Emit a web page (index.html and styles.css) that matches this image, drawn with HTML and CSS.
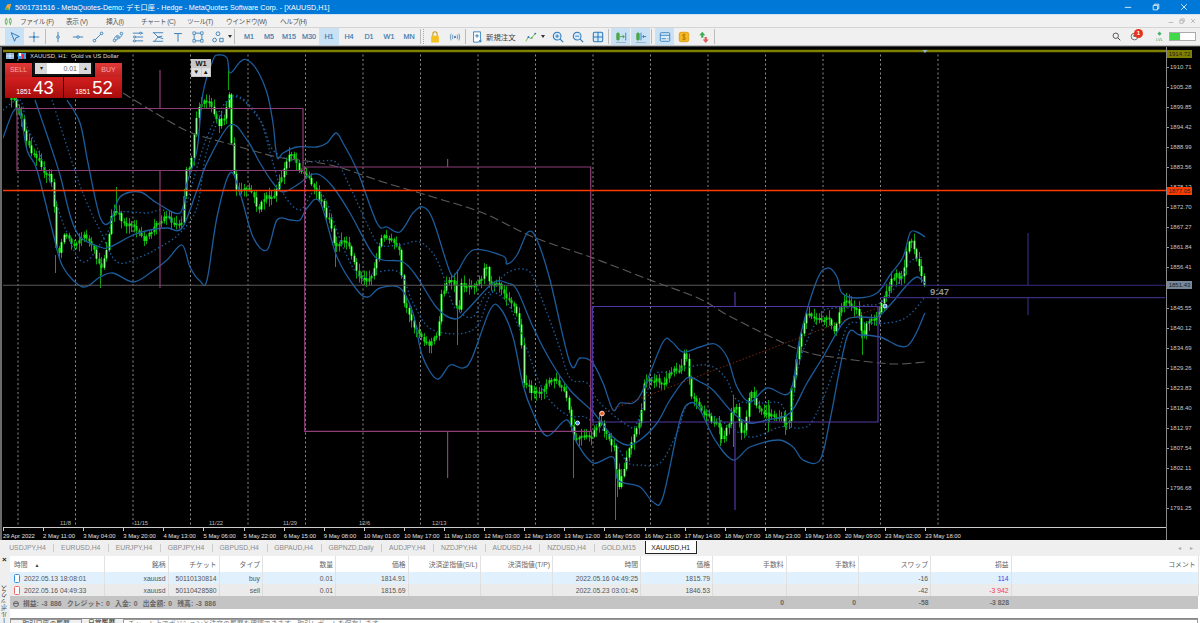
FILE: index.html
```html
<!DOCTYPE html>
<html lang="ja">
<head>
<meta charset="utf-8">
<title>MetaTrader 5 - XAUUSD,H1</title>
<link rel="stylesheet" href="styles.css">
</head>
<body>
<div class="app">
  <header class="titlebar">
    <svg class="appicon" viewBox="0 0 10 10"><path d="M1 8L4 2L9 1L7 9Z" fill="#f2a53a"/><path d="M1 8L4 5L7 9Z" fill="#4fb24f"/></svg>
    <span class="title-text">5001731516 - MetaQuotes-Demo: デモ口座 - Hedge - MetaQuotes Software Corp. - [XAUUSD,H1]</span>
    <div class="wincontrols">
      <svg viewBox="0 0 10 10"><path d="M1 5.500H9" stroke="#fff" fill="none"/></svg>
      <svg viewBox="0 0 10 10"><path d="M1.500 3H7V8.500H1.500ZM3 3V1.500H8.500V7H7" stroke="#fff" fill="none"/></svg>
      <svg viewBox="0 0 10 10"><path d="M1.500 1.500L8.500 8.500M8.500 1.500L1.500 8.500" stroke="#fff" fill="none"/></svg>
    </div>
  </header>

  <nav class="menubar">
    <svg class="menuicon" viewBox="0 0 10 10"><path d="M2.500 1V9M7 1V9" stroke="#4aa64a"/><path d="M1.500 3H3.500V7H1.500ZM6 2.500H8V6.500H6Z" fill="#fff" stroke="#4aa64a" stroke-width=".8"/></svg>
    <span class="mi m1">ファイル (F)</span>
    <span class="mi m2">表示 (V)</span>
    <span class="mi m3">挿入(I)</span>
    <span class="mi m4">チャート (C)</span>
    <span class="mi m5">ツール(T)</span>
    <span class="mi m6">ウインドウ(W)</span>
    <span class="mi m7">ヘルプ(H)</span>
    <div class="mdicontrols">
      <svg viewBox="0 0 8 8"><path d="M1 6H7" stroke="#aaa" fill="none"/></svg>
      <svg viewBox="0 0 8 8"><path d="M1 3H5.500V7H1ZM2.500 3V1.200H7V5H5.500" stroke="#aaa" fill="none"/></svg>
      <svg viewBox="0 0 8 8"><path d="M1.500 1.500L6.500 6.500M6.500 1.500L1.500 6.500" stroke="#aaa" fill="none"/></svg>
    </div>
  </nav>

  <div class="toolbar">
    <span class="tb on first"><svg class="ti" viewBox="0 0 14 14"><path d="M2.500 2L12 6.500L8 8L6.500 12Z" fill="none" stroke="#2b78b8" stroke-width="1.100"/></svg></span>
    <span class="tb"><svg class="ti" viewBox="0 0 14 14"><path d="M7 1V13M1 7H13" stroke="#2b78b8"/><circle cx="7" cy="7" r="1.200" fill="#2b78b8"/></svg></span>
    <i class="sep"></i>
    <span class="tb"><svg class="ti" viewBox="0 0 14 14"><path d="M7 1V13" stroke="#2b78b8"/><circle cx="7" cy="7" r="1.500" fill="#eee" stroke="#2b78b8"/></svg></span>
    <span class="tb"><svg class="ti" viewBox="0 0 14 14"><path d="M1 7H13" stroke="#2b78b8"/><circle cx="7" cy="7" r="1.500" fill="#eee" stroke="#2b78b8"/></svg></span>
    <span class="tb"><svg class="ti" viewBox="0 0 14 14"><path d="M3 11L11 3" stroke="#2b78b8"/><circle cx="2.800" cy="11.200" r="1.500" fill="#eee" stroke="#2b78b8"/><circle cx="11.200" cy="2.800" r="1.500" fill="#eee" stroke="#2b78b8"/></svg></span>
    <span class="tb"><svg class="ti" viewBox="0 0 14 14"><path d="M2 9L6 5M8 9L12 5M3 12L7 9" stroke="#2b78b8"/><circle cx="3" cy="11" r="1.500" fill="#eee" stroke="#2b78b8"/><circle cx="7" cy="7" r="1.500" fill="#eee" stroke="#2b78b8"/><circle cx="11" cy="3" r="1.500" fill="#eee" stroke="#2b78b8"/></svg></span>
    <span class="tb"><svg class="ti" viewBox="0 0 14 14"><path d="M1 2.500H13M3 7H13M1 11.500H13" stroke="#2b78b8"/><circle cx="10" cy="2.500" r="1.200" fill="#eee" stroke="#2b78b8"/><circle cx="3" cy="7" r="1.200" fill="#eee" stroke="#2b78b8"/><circle cx="3" cy="11.500" r="1.200" fill="#eee" stroke="#2b78b8"/></svg></span>
    <span class="tb"><svg class="ti" viewBox="0 0 14 14"><path d="M1 2H13M1 12H13M2 2L7 7L3 12M7 7L12 6M7 7L13 9" stroke="#2b78b8" fill="none"/></svg></span>
    <span class="tb"><svg class="ti" viewBox="0 0 14 14"><path d="M2.500 3H11.500M7 3V12.500" stroke="#2b78b8" stroke-width="1.100"/></svg></span>
    <span class="tb"><svg class="ti" viewBox="0 0 14 14"><path d="M2.500 2.500H11.500V11.500H2.500Z" fill="none" stroke="#2b78b8"/><path d="M1 1H4V4H1ZM10 1H13V4H10ZM1 10H4V13H1ZM10 10H13V13H10Z" fill="#eee" stroke="#2b78b8" stroke-width=".8"/></svg></span>
    <span class="tb"><svg class="ti" viewBox="0 0 14 14"><circle cx="7" cy="3.200" r="2.200" fill="none" stroke="#2b78b8"/><circle cx="3" cy="10.500" r="2.200" fill="none" stroke="#2b78b8"/><path d="M9 8.500H13V12.500H9Z" fill="none" stroke="#2b78b8"/></svg></span>
    <i class="drop"></i>
    <i class="sep s2"></i>
    <span class="tb tf">M1</span><span class="tb tf">M5</span><span class="tb tf">M15</span><span class="tb tf">M30</span><span class="tb tf on">H1</span><span class="tb tf">H4</span><span class="tb tf">D1</span><span class="tb tf">W1</span><span class="tb tf">MN</span>
    <i class="sep s3"></i><i class="grip"></i>
    <span class="tb"><svg class="ti" viewBox="0 0 14 14"><path d="M4.500 6V3.500A2.500 2.500 0 0 1 9.500 3.500V6" fill="none" stroke="#c99a1a" stroke-width="1.200"/><rect x="2.500" y="5.500" width="9" height="8" rx="1" fill="#f3c01f"/></svg></span>
    <span class="tb"><svg class="ti" viewBox="0 0 14 14"><circle cx="7" cy="7" r="1.500" fill="#5f8fb8"/><path d="M4.500 4.500Q3 7 4.500 9.500M9.500 4.500Q11 7 9.500 9.500M2.500 3Q.5 7 2.500 11M11.500 3Q13.500 7 11.500 11" fill="none" stroke="#5f8fb8"/></svg></span>
    <i class="sep s4"></i>
    <span class="neworder"><svg class="ti" viewBox="0 0 14 14"><path d="M3 1H11V10L8.500 13H3Z" fill="#fff" stroke="#2b78b8"/><path d="M7 3.500V8M4.800 5.700H9.200" stroke="#2b78b8"/><path d="M9 13L12 9.500V13Z" fill="#2b78b8"/></svg><span>新規注文</span></span>
    <span class="tb narrow"><svg class="ti" viewBox="0 0 14 14"><path d="M1 12L4 7L7 9L12 3" fill="none" stroke="#62b04a"/><circle cx="4" cy="7" r="1.100" fill="#2b78b8"/><circle cx="8" cy="8" r="1.100" fill="#62b04a"/><circle cx="12" cy="3" r="1.100" fill="#2b78b8"/></svg></span>
    <i class="drop d2"></i>
    <span class="tb"><svg class="ti" viewBox="0 0 14 14"><circle cx="6" cy="6" r="4.500" fill="#d8ebf8" stroke="#2b78b8" stroke-width="1.200"/><path d="M9.500 9.500L13 13" stroke="#2b78b8" stroke-width="1.400"/><path d="M6 3.800V8.200M3.800 6H8.200" stroke="#2b78b8"/></svg></span>
    <span class="tb"><svg class="ti" viewBox="0 0 14 14"><circle cx="6" cy="6" r="4.500" fill="#d8ebf8" stroke="#2b78b8" stroke-width="1.200"/><path d="M9.500 9.500L13 13" stroke="#2b78b8" stroke-width="1.400"/><path d="M3.800 6H8.200" stroke="#2b78b8"/></svg></span>
    <span class="tb"><svg class="ti" viewBox="0 0 14 14"><rect x="1.500" y="1.500" width="11" height="11" rx="1.500" fill="#d8ebf8" stroke="#2b78b8" stroke-width="1.200"/><path d="M7 1.500V12.500M1.500 7H12.500" stroke="#2b78b8" stroke-width="1.200"/></svg></span>
    <i class="sep s5"></i>
    <span class="tb on act"><svg class="ti" viewBox="0 0 14 14"><path d="M2 3H5V10H2ZM3.500 1V12" fill="#56b84a" stroke="#3f9a3a" stroke-width=".8"/><path d="M6 6.500H10.500M9 4.800L11 6.500L9 8.200" fill="none" stroke="#3f9a3a"/><path d="M12.500 2V11" stroke="#2b78b8"/><path d="M1 13.500H13" stroke="#9ab"/></svg></span>
    <span class="tb on act"><svg class="ti" viewBox="0 0 14 14"><path d="M2 3H5V10H2ZM3.500 1V12" fill="#56b84a" stroke="#3f9a3a" stroke-width=".8"/><path d="M7 2V11" stroke="#2b78b8"/><path d="M9 6.500H13M10.500 4.800L8.800 6.500L10.500 8.200" fill="none" stroke="#2b78b8"/><path d="M1 13.500H13" stroke="#9ab"/></svg></span>
    <i class="sep s6"></i>
    <span class="tb on term"><svg class="ti" viewBox="0 0 14 14"><rect x="1.500" y="2" width="11" height="10" rx="1" fill="#d8ebf8" stroke="#2b78b8"/><path d="M1.500 5H12.500M3 9H8M10 9H11" stroke="#2b78b8"/></svg></span>
    <span class="tb"><svg class="ti" viewBox="0 0 14 14"><rect x="1.500" y="1.500" width="11" height="11" rx="2" fill="#f4b91f" stroke="#e39a12"/><path d="M9 4.500Q7 3.500 5.500 4.800Q5 6.500 7 7T8.500 9.500Q7 10.500 5 9.500M7 3V11" fill="none" stroke="#a8650c" stroke-width=".8"/></svg></span>
    <span class="tb"><svg class="ti" viewBox="0 0 14 14"><path d="M1.500 5L5 1L8.500 5H6.300V8H3.700V5Z" fill="#39ac4f"/><path d="M5.500 10L9 14L12.500 10H10.300V7H7.700V10Z" fill="#e25b5b"/></svg></span>
    <i class="sep s7"></i>
    <div class="tb-right">
      <svg class="rsearch" viewBox="0 0 12 12"><circle cx="5" cy="5" r="3.600" fill="none" stroke="#444" stroke-width="1.200"/><path d="M7.800 7.800L11 11" stroke="#444" stroke-width="1.300"/></svg>
      <span class="account"><svg viewBox="0 0 12 12"><circle cx="6" cy="6" r="4.500" fill="none" stroke="#666" stroke-width="1.200"/><circle cx="6" cy="5" r="1.600" fill="#666"/></svg><b class="badge">1</b></span>
      <span class="lvl"><svg viewBox="0 0 10 7"><path d="M5 0L8 3L5 6L2 3Z" fill="#45b36b"/></svg><em>LVL</em></span>
      <span class="meter"><i></i></span>
    </div>
  </div>

  <section class="chartframe">
    <div class="plot">
      <svg id="chart" class="canvas" viewBox="3 47 1163 480" width="1163" height="480">
        <g id="grid"></g>
        <g id="candles"></g>
        <g id="bands"></g>
        <g class="pink">
          <path d="M160 70V108M17 108.500H303V170.500H17ZM160 170V288M304.700 167H590.700V431.300H304.700ZM447.600 159V167M447.600 431V478"/>
        </g>
        <g class="violet">
          <path d="M592.300 306.500H878V422H592.300ZM735 292V306M735 422V510"/>
        </g>
        <path class="violet-dark" d="M880 285.300H1165M880 297.600H1165M1028 233V285M1028 298V315"/>
        <path class="priceline" d="M3 285.300H880"/>
        <path class="stopline" d="M3 190.500H1166"/>
        <path class="olive" d="M3 51H1166"/>
        <path class="marker" d="M922.500 50H927.500L925 53Z"/>
        <path class="tradeline" d="M602 413L885 305"/>
        <g class="trades">
          <circle class="t-buy" cx="577.500" cy="423" r="2"/>
          <circle class="t-sell" cx="602" cy="413.500" r="2.300"/>
          <circle class="t-buy" cx="885" cy="306" r="2"/>
        </g>
        <g class="weeks">
          <text x="60" y="525">11/8</text><text x="134" y="525">11/15</text><text x="209" y="525">11/22</text><text x="283" y="525">11/29</text><text x="359" y="525">12/6</text><text x="432" y="525">12/13</text>
        </g>
      </svg>
      <div class="timeaxis">
        <span>29 Apr 2022</span><span>2 May 11:00</span><span>3 May 04:00</span><span>3 May 20:00</span><span>4 May 13:00</span><span>5 May 06:00</span><span>5 May 22:00</span><span>6 May 15:00</span><span>9 May 08:00</span><span>10 May 01:00</span><span>10 May 17:00</span><span>11 May 10:00</span><span>12 May 03:00</span><span>12 May 19:00</span><span>13 May 12:00</span><span>16 May 05:00</span><span>16 May 21:00</span><span>17 May 14:00</span><span>18 May 07:00</span><span>18 May 23:00</span><span>19 May 16:00</span><span>20 May 09:00</span><span>23 May 02:00</span><span>23 May 18:00</span>
      </div>
    </div>
    <div class="priceaxis">
      <span>1910.71</span><span>1905.28</span><span>1899.85</span><span>1894.42</span><span>1888.99</span><span>1883.56</span><span>1878.13</span><span>1872.70</span><span>1867.27</span><span>1861.84</span><span>1856.41</span><span></span><span>1845.55</span><span>1840.12</span><span>1834.69</span><span>1829.26</span><span>1823.83</span><span>1818.40</span><span>1812.97</span><span>1807.54</span><span>1802.11</span><span>1796.68</span><span>1791.25</span>
    </div>
    <b class="tag tag-olive">1914.72</b>
    <b class="tag tag-red">1877.05</b>
    <b class="tag tag-grey">1851.43</b>

    <div class="charthead">
      <svg viewBox="0 0 20 8" width="20" height="8"><rect x="0" y="1" width="8" height="6" fill="#8fb4dc"/><path d="M0 4H8M4 1V7" stroke="#fff" stroke-width=".6"/><rect x="12" y="1" width="8" height="6" fill="#3f9be8"/><rect x="13" y="1" width="2" height="3" fill="#fff"/><rect x="16" y="2" width="2" height="5" fill="#e24"/></svg>
      <span>XAUUSD, H1:  Gold vs US Dollar</span>
    </div>
    <div class="trade">
      <div class="trade-top">
        <span class="mini">SELL</span>
        <span class="lot"><i class="lotbtn">▾</i><span class="lotval">0.01</span><i class="lotbtn">▴</i></span>
        <span class="mini">BUY</span>
      </div>
      <div class="trade-bottom">
        <span class="quote"><small>1851</small><strong>43</strong></span>
        <span class="quote"><small>1851</small><strong>52</strong></span>
      </div>
    </div>
    <div class="w1"><b>W1</b><span><i>▼</i><i>▲</i></span></div>
    <span class="countdown">9:47</span>
  </section>

  <div class="tabs">
    <span>USDJPY,H4</span><span>EURUSD,H4</span><span>EURJPY,H4</span><span>GBPJPY,H4</span><span>GBPUSD,H4</span><span>GBPAUD,H4</span><span>GBPNZD,Daily</span><span>AUDJPY,H4</span><span>NZDJPY,H4</span><span>AUDUSD,H4</span><span>NZDUSD,H4</span><span>GOLD,M15</span><span class="active">XAUUSD,H1</span>
    <div class="tabnav"><i>◂</i><i>▸</i></div>
  </div>

  <section class="terminal">
    <aside class="toolbox"><b>×</b><span>ツールボックス</span></aside>
    <div class="tablewrap">
      <table class="trades-table">
        <colgroup><col class="c1"><col class="c2"><col class="c3"><col class="c4"><col class="c5"><col class="c6"><col class="c7"><col class="c8"><col class="c9"><col class="c10"><col class="c11"><col class="c12"><col class="c13"><col class="c14"><col class="c15"></colgroup>
        <thead>
          <tr><th class="left">時間 <em>▲</em></th><th>銘柄</th><th>チケット</th><th>タイプ</th><th>数量</th><th>価格</th><th>決済逆指値(S/L)</th><th>決済指値(T/P)</th><th>時間</th><th>価格</th><th>手数料</th><th>手数料</th><th>スワップ</th><th>損益</th><th>コメント</th></tr>
        </thead>
        <tbody>
          <tr class="buy"><td class="left"><i class="rowicon"></i>2022.05.13 18:08:01</td><td>xauusd</td><td>50110130814</td><td>buy</td><td>0.01</td><td>1814.91</td><td></td><td></td><td>2022.05.16 04:49:25</td><td>1815.79</td><td></td><td></td><td>-16</td><td class="pos">114</td><td></td></tr>
          <tr class="sell"><td class="left"><i class="rowicon"></i>2022.05.16 04:49:33</td><td>xauusd</td><td>50110428580</td><td>sell</td><td>0.01</td><td>1815.69</td><td></td><td></td><td>2022.05.23 03:01:45</td><td>1846.53</td><td></td><td></td><td>-42</td><td class="neg">-3 942</td><td></td></tr>
          <tr class="total"><td class="summary" colspan="10"><i class="minus"></i>損益: -3 886&nbsp; クレジット: 0&nbsp; 入金: 0&nbsp; 出金額: 0&nbsp; 残高: -3 886</td><td>0</td><td>0</td><td>-58</td><td>-3 828</td><td></td></tr>
        </tbody>
      </table>
      <div class="bottomtabs">
        <span class="btn">取引口座の履歴</span><span class="lab">日常履歴</span><span class="longbox">チャート上でポジションと注文の履歴を確認できます。取引レポートを保存します。</span>
      </div>
    </div>
  </section>
</div>
<script src="chart.js"></script>
</body>
</html>
```
FILE: styles.css
```css
* { box-sizing: border-box; }
html, body { margin: 0; padding: 0; background: #f0f0f0; }
body { font-family: "Liberation Sans", "Noto Sans CJK JP", sans-serif; font-size: 7px; color: #444; }
i, em { font-style: normal; }
.app { width: 1200px; height: 623px; overflow: hidden; display: flex; flex-direction: column; position: relative; }

/* title */
.titlebar { height: 14px; background: #0078d7; color: #fff; display: flex; align-items: center; padding-left: 4px; font-size: 7.2px; flex: none; }
.appicon { width: 8px; height: 8px; margin-right: 3px; }
.wincontrols { margin-left: auto; display: flex; gap: 20px; padding-right: 12px; }
.wincontrols svg { width: 8px; height: 8px; }

/* menu */
.menubar { height: 13px; display: flex; align-items: center; flex: none; background: #f1f1f1; border-top: 1px solid #cfe3f3; position: relative; font-size: 6.7px; letter-spacing: -.45px; color: #555; }
.menuicon { width: 9px; height: 9px; margin: 0 7px 0 4px; }
.mi { white-space: nowrap; flex: none; }
.m1 { width: 46px; }
.m2 { width: 40px; }
.m3 { width: 35px; }
.m4 { width: 46px; }
.m5 { width: 39px; }
.m6 { width: 54px; }
.m7 { width: 30px; }
.mdicontrols { margin-left: auto; display: flex; gap: 5px; padding-right: 4px; }
.mdicontrols svg { width: 6px; height: 6px; }

/* toolbar */
.toolbar { height: 19px; flex: none; display: flex; align-items: center; background: #f0f0f0; border-top: 1px solid #d4d4d4; border-bottom: 1px solid #bdbdbd; }
.tb { width: 20px; height: 17px; display: flex; align-items: center; justify-content: center; flex: none; }
.tb.first { margin-left: 5px; width: 19px; margin-right: 0; }
.tb.on { background: #c9e1f5; }
.ti { width: 12px; height: 12px; display: block; }
.sep { width: 1px; height: 15px; background: #bbb; flex: none; margin: 0 2px 0 1px; }
.sep.s2 { margin-left: 2px; margin-right: 4px; }
.sep.s3 { margin: 0 0 0 1px; }
.grip { width: 1px; height: 15px; border-left: 1px dotted #aaa; margin: 0 1px 0 2px; flex: none; }
.sep.s4 { margin: 0 1px 0 0; }
.sep.s5 { margin: 0 2px 0 0; }
.sep.s6 { margin: 0 2px 0 0; }
.sep.s7 { margin: 0; }
.tb.act { width: 19px; margin-right: 1px; }
.tb.term { width: 19px; margin-left: 1px; }
.drop { width: 0; height: 0; border-left: 2.5px solid transparent; border-right: 2.5px solid transparent; border-top: 3px solid #333; flex: none; }
.drop.d2 { margin: 0 3px 0 0; }
.tf { font-size: 7.2px; font-weight: 400; color: #2f76ad; -webkit-text-stroke: .15px #2f76ad; }
.neworder { display: flex; align-items: center; gap: 3px; width: 54px; flex: none; font-size: 7.4px; color: #444; padding-left: 4px; }
.neworder span { white-space: nowrap; }
.tb.narrow { width: 20px; }
.tb-right { margin-left: auto; display: flex; align-items: center; padding-right: 4px; }
.rsearch { width: 9px; height: 9px; margin-right: 9px; }
.account { position: relative; display: block; width: 9px; height: 9px; margin-right: 16px; }
.account svg { width: 9px; height: 9px; display: block; }
.badge { position: absolute; left: 4px; top: -3px; width: 9px; height: 9px; border-radius: 50%; background: #e8321e; color: #fff; font-size: 6px; line-height: 9px; text-align: center; }
.lvl { display: flex; flex-direction: column; align-items: center; width: 9px; margin-right: 5px; color: #3aa65a; font-size: 4px; line-height: 5px; }
.lvl svg { width: 7px; height: 6px; }
.meter { display: block; width: 27px; height: 9px; background: #fff; border: 1px solid #aaa; }
.meter i { display: block; width: 10px; height: 100%; background: #3fd94a; }

/* chart */
.chartframe { flex: none; height: 494px; display: flex; position: relative; background: #000; border-top: 1px solid #444; }
.plot { width: 1166px; flex: none; display: flex; flex-direction: column; padding-left: 3px; background: #000; box-shadow: inset 2px 0 0 #6a6a6a; }
.canvas { display: block; flex: none; }
.timeaxis { flex: none; display: grid; grid-template-columns: repeat(24, 40.1px); height: 13px; border-top: 1px solid #ccc; color: #e2e2e2; font-size: 5.9px; }
.timeaxis span { position: relative; padding: 4px 0 0 0; white-space: nowrap; line-height: 8px; }
.timeaxis span::before { content: ""; position: absolute; left: 0; top: 0; width: 1px; height: 3px; background: #ccc; }
.priceaxis { width: 34px; flex: none; height: 493px; border-left: 1px solid #888; display: flex; flex-direction: column; padding-top: 10px; color: #c8c8c8; font-size: 6px; }
.priceaxis span { height: 20.05px; flex: none; line-height: 20.05px; padding-left: 3px; position: relative; }
.priceaxis span::before { content: ""; position: absolute; left: 0; top: 10px; width: 2px; height: 1px; background: #999; }
.tag { position: absolute; left: 1167px; width: 25px; height: 8px; font-size: 6px; line-height: 8px; font-weight: 400; text-align: center; color: #222; }
.tag-olive { top: 3px; background: #808000; }
.tag-red { top: 140px; background: #ff3c00; }
.tag-grey { top: 234px; background: #77889a; }

.charthead { position: absolute; left: 6px; top: 5px; display: flex; align-items: center; gap: 4px; color: #ddd; font-size: 6px; white-space: pre; }
.trade { position: absolute; left: 5px; top: 15px; width: 117px; }
.trade-top { display: flex; height: 15px; }
.mini { width: 27px; height: 15px; background: linear-gradient(#e03a3a, #c42020); color: #f5a8a8; text-align: center; font-size: 7px; line-height: 13px; margin-top: 1px; border-bottom: 1px solid #7a1010; }
.lot { width: 60px; height: 14px; margin: 0 2px 0 1px; background: #fff; border: 1px solid #111; border-width: 1px 2px 2px; display: flex; align-items: center; }
.lotbtn { width: 12px; height: 100%; background: #d8d8d8; color: #222; font-size: 6px; line-height: 11px; text-align: center; flex: none; }
.lotval { flex: 1; text-align: right; padding-right: 2px; font-size: 7px; color: #666; }
.trade-bottom { display: flex; gap: 1px; height: 21px; }
.quote { flex: 1; background: linear-gradient(#d32020, #a80c0c); color: #fff; display: flex; align-items: flex-end; justify-content: center; gap: 2px; padding-left: 2px; }
.quote small { font-size: 6.800px; line-height: 10px; padding-bottom: 1px; }
.quote strong { font-size: 18.500px; line-height: 20px; font-weight: 400; }
.w1 { position: absolute; left: 191px; top: 12px; width: 20px; height: 18px; background: #c8c8c8; color: #111; text-align: center; font-size: 7.5px; line-height: 9px; display: flex; flex-direction: column; }
.w1 b { height: 8px; line-height: 9px; }
.w1 span { display: flex; gap: 1px; padding: 1px; }
.w1 i { flex: 1; height: 8px; font-size: 6px; line-height: 8px; background: #dedede; }
.countdown { position: absolute; left: 930px; top: 239px; color: #8f8f8f; font-size: 9.500px; font-weight: 700; line-height: 11px; }

/* svg strokes */
.canvas path, .canvas polyline { fill: none; }
.pink path { stroke: #8e3d76; stroke-width: 1.200; }
.violet path { stroke: #5238a6; stroke-width: 1.200; }
.violet-dark { stroke: #3a2c80; stroke-width: 1.100; }
.priceline { stroke: #585858; stroke-width: 1.100; }
.stopline { stroke: #ff3a00; stroke-width: 1.300; }
.olive { stroke: #808000; stroke-width: 2.500; }
.canvas .marker { fill: #8fb4dc; }
.tradeline { stroke: #8a2a12; stroke-width: .9; stroke-dasharray: 1.500 2; }
.t-buy { fill: #4a8fe0; stroke: #dfeeff; stroke-width: 1; }
.t-sell { fill: #ef5b30; stroke: #ffd9c8; stroke-width: 1; }
.weeks text { fill: #bdbdbd; font-size: 5.800px; }
.gridline { stroke: #e8e8e8; stroke-width: .8; stroke-dasharray: 2 2.500; opacity: .75; }
.wick { stroke: #0ca20c; stroke-width: 1; }
.body { stroke: #16dc16; stroke-width: 2.200; }
.core { stroke: #b8ffb8; stroke-width: .8; }
.band { stroke: #1c5c9c; stroke-width: 1.300; }
.band.dot { stroke-dasharray: 1.500 2.500; }
.ma { stroke: #5a5a5a; stroke-width: 1.100; stroke-dasharray: 9 4; }

/* tabs */
.tabs { flex: none; height: 16px; display: flex; align-items: flex-start; background: #efefef; padding: 1px 0 0 1.500px; color: #8c8c8c; font-size: 6.800px; position: relative; }
.tabs span { height: 12px; line-height: 13px; padding: 0 7.700px; position: relative; white-space: nowrap; }
.tabs span + span::before { content: ""; position: absolute; left: 0; top: 3px; height: 8px; width: 1px; background: #ccc; }
.tabs .active { background: #fff; color: #222; border: 1px solid #222; border-width: 0 1px 1px 1px; height: 13px; margin-left: 1px; padding: 0 5.700px; }
.tabs .active::before { display: none; }
.tabnav { margin-left: auto; display: flex; gap: 9px; padding: 3px 7px 0 0; color: #aaa; font-size: 6px; }

/* terminal */
.terminal { flex: 1; display: flex; min-height: 0; background: #f0f0f0; }
.toolbox { width: 10px; flex: none; position: relative; background: #efefef; overflow: hidden; }
.toolbox b { position: absolute; left: 2px; top: 0; font-size: 8px; line-height: 8px; color: #222; }
.toolbox span { position: absolute; left: 1px; top: 29px; writing-mode: vertical-rl; transform: rotate(180deg); font-size: 6.500px; color: #444; white-space: nowrap; line-height: 8px; }
.tablewrap { flex: 1; min-width: 0; padding-right: 2px; background: #fff; }
.trades-table { border-collapse: collapse; table-layout: fixed; width: 1188px; background: #fff; font-size: 6.800px; color: #555; }
.c1 { width: 94px; } .c2 { width: 64px; } .c3 { width: 51px; } .c4 { width: 43.500px; } .c5 { width: 73px; } .c6 { width: 72.500px; } .c7 { width: 72px; } .c8 { width: 72.500px; } .c9 { width: 88px; } .c10 { width: 72px; } .c11 { width: 73.500px; } .c12 { width: 72px; } .c13 { width: 72.500px; } .c14 { width: 80.500px; } .c15 { width: 187px; }
.trades-table th, .trades-table td { text-align: right; padding: 0 2px; white-space: nowrap; overflow: hidden; font-weight: 400; border-right: 1px solid #e2e2e2; }
.trades-table th { height: 16px; color: #666; }
.trades-table td { height: 12px; }
.trades-table .left { text-align: left; padding-left: 4px; }
.trades-table th em { font-size: 5px; margin-left: 5px; color: #444; }
.buy td { background: #e0f0fc; }
.sell td { background: #ebebeb; border-right-color: #dcdcdc; }
.total td { background: #c4c4c4; height: 13px; font-weight: 700; color: #666; border-right: 0; }
.trades-table .summary { text-align: left; padding-left: 3px; word-spacing: .8px; }
.rowicon { display: inline-block; vertical-align: -2px; width: 6px; height: 9px; margin-right: 4px; border: 1px solid #3a8fd8; border-radius: 1.500px; background: #fff; }
.sell .rowicon { border-color: #e86a6a; }
.minus { display: inline-block; vertical-align: -1px; width: 6px; height: 6px; margin-right: 4px; border: 1px solid #666; border-radius: 50%; background: linear-gradient(transparent 1.500px, #666 1.500px, #666 2.500px, transparent 2.500px); }
.pos { color: #3f3fe8; }
.neg { color: #f04040; }
.bottomtabs { margin-top: 9px; height: 5px; border-top: 1px solid #888; background: #f0f0f0; display: flex; gap: 6px; overflow: hidden; margin-left: -10px; padding-left: 10px; font-size: 6.800px; line-height: 8px; }
.btn { width: 72px; flex: none; border: 1px solid #999; text-align: center; height: 10px; }
.lab { flex: none; color: #222; width: 29px; }
.longbox { flex: 1; border: 1px solid #999; height: 10px; padding-left: 4px; color: #777; background: #fff; }
```
FILE: chart.js
```js
(function () {
  var NS = 'http://www.w3.org/2000/svg';
  function el(parent, cls, d) {
    var p = document.createElementNS(NS, 'path');
    p.setAttribute('class', cls);
    p.setAttribute('d', d);
    parent.appendChild(p);
  }
  function smooth(pts) {
    var d = 'M' + pts[0][0] + ' ' + pts[0][1];
    for (var i = 0; i < pts.length - 1; i++) {
      var p0 = pts[i - 1] || pts[i], p1 = pts[i], p2 = pts[i + 1], p3 = pts[i + 2] || p2;
      var c1x = p1[0] + (p2[0] - p0[0]) / 6, c1y = p1[1] + (p2[1] - p0[1]) / 6;
      var c2x = p2[0] - (p3[0] - p1[0]) / 6, c2y = p2[1] - (p3[1] - p1[1]) / 6;
      d += 'C' + c1x.toFixed(1) + ' ' + c1y.toFixed(1) + ' ' + c2x.toFixed(1) + ' ' + c2y.toFixed(1) + ' ' + p2[0] + ' ' + p2[1];
    }
    return d;
  }

  // grid
  var grid = document.getElementById('grid'), g = '';
  for (var k = 0; k < 17; k++) { g += 'M' + (18 + 57.5 * k) + ' 50V527'; }
  el(grid, 'gridline', g);

  // candles
  var closes = [[11,100],[13,100],[20,115],[25,140],[30,150],[40,160],[43,175],[50,175],[53,195],[55,240],[57,260],[62,235],[66,235],[72,245],[78,240],[85,235],[90,245],[95,255],[100,270],[107,245],[112,210],[118,215],[125,225],[132,222],[138,235],[145,240],[155,225],[165,215],[175,225],[182,220],[185,170],[190,165],[195,120],[200,105],[205,100],[210,105],[213,115],[218,125],[225,115],[228,85],[230,125],[232,160],[235,190],[240,190],[250,190],[258,210],[265,195],[272,200],[278,185],[285,165],[290,150],[297,165],[300,170],[310,180],[315,190],[322,205],[330,225],[335,250],[342,240],[350,250],[357,275],[365,280],[372,275],[380,240],[385,235],[395,245],[400,255],[402,300],[410,320],[420,335],[428,345],[437,335],[441,295],[447,280],[455,285],[457,330],[460,285],[470,285],[480,280],[485,265],[490,285],[497,280],[505,295],[510,300],[515,310],[520,330],[523,380],[530,390],[537,395],[547,383],[553,378],[560,387],[565,393],[570,420],[573,440],[582,437],[590,437],[597,427],[600,420],[605,433],[610,443],[615,450],[617,493],[622,473],[627,453],[632,437],[640,420],[643,387],[648,378],[657,380],[663,385],[672,368],[680,370],[683,350],[687,363],[690,393],[697,403],[700,410],[710,420],[717,423],[722,440],[728,423],[735,403],[742,440],[750,390],[757,410],[767,415],[780,417],[788,427],[790,393],[795,367],[800,337],[807,310],[813,320],[827,318],[833,333],[840,310],[845,297],[852,307],[857,310],[862,337],[867,323],[877,315],[882,298],[888,285],[895,275],[902,278],[905,253],[910,237],[915,257],[920,273],[925,287]];
  var seed = 12345;
  function rnd() { seed = (seed * 16807) % 2147483647; return seed / 2147483647; }
  function closeAt(x) {
    for (var i = 0; i < closes.length - 1; i++) {
      if (x >= closes[i][0] && x <= closes[i + 1][0]) {
        var t = (x - closes[i][0]) / (closes[i + 1][0] - closes[i][0] || 1);
        return closes[i][1] + (closes[i + 1][1] - closes[i][1]) * t;
      }
    }
    return closes[closes.length - 1][1];
  }
  var wicks = '', bodies = '', cores = '', prev = closeAt(11);
  for (var x = 11; x <= 925.5; x += 2.5) {
    var c = closeAt(x) + (rnd() - 0.5) * 5;
    var top = Math.min(prev, c), bot = Math.max(prev, c);
    if (bot - top < 2) { bot = top + 2; }
    var px = Math.round(x) + 0.5;
    wicks += 'M' + px + ' ' + (top - rnd() * 7 - 1).toFixed(1) + 'V' + (bot + rnd() * 7 + 1).toFixed(1);
    bodies += 'M' + px + ' ' + top.toFixed(1) + 'V' + bot.toFixed(1);
    if (bot - top > 6) { cores += 'M' + px + ' ' + top.toFixed(1) + 'V' + bot.toFixed(1); }
    prev = c;
  }
  [[55,255,273],[100,265,288],[116,187,205],[228,70,90],[335,235,267],[573,425,478],[617,470,497],[615,470,520],[862,330,355],[457,270,345],[768,400,432],[785,410,435],[720,420,446],[733,395,447]].forEach(function (w) {
    wicks += 'M' + (w[0] + 0.5) + ' ' + w[1] + 'V' + w[2];
  });
  var cg = document.getElementById('candles');
  el(cg, 'wick', wicks);
  el(cg, 'body', bodies);
  el(cg, 'core', cores);

  // indicators
  var upper = [[67,100],[80,123],[88,163],[100,217],[110,222],[120,197],[140,192],[157,203],[180,213],[187,183],[197,150],[203,93],[213,60],[218,55],[227,58],[230,73],[240,62],[247,60],[257,70],[267,93],[273,123],[277,157],[283,153],[297,147],[317,147],[327,143],[336,133],[343,143],[357,170],[377,223],[387,227],[400,232],[413,213],[423,207],[433,220],[450,272],[457,272],[473,250],[503,256],[507,264],[517,255],[528,232],[537,240],[550,280],[570,363],[580,358],[592,362],[603,383],[613,410],[620,403],[633,403],[643,390],[663,342],[672,342],[683,352],[700,347],[715,344],[727,357],[737,387],[750,402],[767,388],[790,392],[800,337],[817,280],[828,268],[837,277],[842,293],[857,298],[877,293],[890,275],[903,257],[910,233],[917,232],[925,237]];
  var mid = [[35,100],[47,135],[60,175],[70,215],[80,237],[100,247],[110,247],[133,235],[150,230],[167,228],[182,228],[197,190],[207,163],[230,125],[247,140],[260,163],[273,183],[283,192],[300,183],[310,175],[320,175],[333,187],[350,213],[372,253],[383,260],[403,262],[417,277],[437,308],[455,319],[467,310],[493,283],[507,283],[517,290],[533,327],[550,360],[570,390],[593,412],[613,437],[627,445],[640,440],[657,423],[670,400],[687,378],[700,382],[713,390],[733,413],[750,423],[767,420],[790,413],[807,383],[823,357],[843,323],[857,317],[877,317],[890,305],[907,285],[917,277],[925,283]];
  var lower = [[3,138],[13,112],[20,112],[27,150],[37,170],[53,233],[63,267],[83,287],[100,277],[113,273],[133,282],[150,273],[167,260],[182,245],[190,267],[200,281],[207,280],[217,217],[230,173],[240,193],[253,237],[267,250],[277,220],[290,220],[300,220],[307,208],[320,202],[337,257],[357,290],[368,297],[380,288],[400,288],[413,313],[422,355],[437,379],[450,365],[463,368],[472,358],[490,310],[500,308],[513,337],[523,385],[533,413],[547,436],[567,420],[577,443],[593,463],[613,457],[618,480],[640,487],[653,502],[663,497],[680,420],[690,403],[700,410],[715,440],[733,460],[750,447],[778,440],[793,447],[803,460],[820,460],[830,420],[847,337],[860,335],[880,337],[907,346],[925,313]];
  var dotA = [[52,100],[77,177],[90,210],[100,230],[117,262],[140,257],[160,247],[180,233],[197,207],[207,150],[227,103],[240,97],[260,120],[273,163],[283,193],[300,210],[315,190],[327,203],[343,247],[360,277],[377,272],[400,273],[413,303],[433,330],[473,330],[490,295],[507,273],[527,270],[537,287],[557,340],[570,378],[587,383],[600,403],[627,425],[637,423],[653,377],[670,372],[700,365],[715,368],[727,380],[737,400],[760,403],[780,403],[790,417],[800,360],[820,315],[833,308],[847,308],[867,305],[880,303],[897,285],[910,262],[923,257]];
  var dotB = [[3,110],[20,100],[27,127],[37,147],[53,190],[63,223],[83,262],[107,233],[117,213],[147,213],[163,210],[180,220],[207,137],[233,97],[260,120],[273,150],[297,162],[320,161],[337,163],[350,187],[370,230],[380,245],[400,245],[420,242],[437,260],[450,297],[457,310],[473,317],[487,293],[505,300],[520,330],[543,390],[567,415],[587,418],[613,440],[627,462],[640,465],[660,463],[677,433],[690,403],[720,420],[750,437],[780,427],[800,428],[813,420],[833,373],[847,327],[863,323],[887,323],[907,317],[925,297]];
  var ma = [[123,93],[167,120],[192,133],[233,145],[277,157],[307,161],[338,167],[383,182],[433,197],[483,213],[533,237],[593,258],[650,280],[700,299],[733,318],[800,350],[840,358],[880,363],[900,364],[925,362]];
  var bands = document.getElementById('bands');
  el(bands, 'ma', smooth(ma));
  el(bands, 'band', smooth(upper));
  el(bands, 'band', smooth(mid));
  el(bands, 'band', smooth(lower));
  el(bands, 'band dot', smooth(dotA));
  el(bands, 'band dot', smooth(dotB));
})();
```
